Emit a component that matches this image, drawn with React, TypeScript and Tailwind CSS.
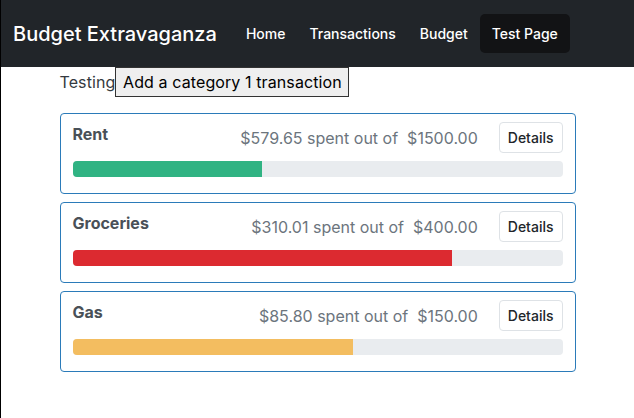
import React from "react";

const cats = [
  { name: "Rent", spent: 579.65, budget: 1500, color: "bg-[#30b383]" },
  { name: "Groceries", spent: 310.01, budget: 400, color: "bg-[#dc2a30]" },
  { name: "Gas", spent: 85.8, budget: 150, color: "bg-[#f3bd60]" },
];

export default function App() {
  return (
    <div className="min-h-[418px] border-l border-black bg-white" style={{ fontFamily: "Inter, 'Noto Sans', sans-serif" }}>
      <nav className="flex h-[67px] items-center bg-[#212529] pl-3">
        <span className="text-[20px] font-medium text-white">Budget Extravaganza</span>
        <div className="ml-[17px] flex items-center text-[14px] font-medium text-white">
          <span className="px-3 py-[9px]">Home</span>
          <span className="px-3 py-[9px]">Transactions</span>
          <span className="px-3 py-[9px]">Budget</span>
          <span className="rounded-[5px] bg-[#121315] px-3 py-[9px]">Test Page</span>
        </div>
      </nav>
      <div className="mx-auto w-[516px]">
        <div className="flex items-center text-[16px] text-[#343a40]">
          <span className="tracking-[0.1px]">Testing</span>
          <button className="h-[30px] w-[234px] border border-[#333] bg-[#efefef] text-center text-[16px] tracking-[0.1px] text-black">Add a category 1 transaction</button>
        </div>
        <div className="mt-4 flex flex-col gap-[8px]">
          {cats.map((c) => {
            const pct = (c.spent / c.budget) * 100;
            return (
              <div key={c.name} className="h-[81px] rounded-[4px] border border-[#2b7bb9] px-3 pt-2">
                <div className="flex items-start">
                  <span className="text-[16px] font-bold text-[#495057]">{c.name}</span>
                  <span className="ml-auto mt-[4px] text-[16px] text-[#6c757d]">
                    ${c.spent.toFixed(2)} spent out of&nbsp; ${c.budget.toFixed(2)}
                  </span>
                  <button className="ml-[21px] h-[31px] rounded-[4px] border border-[#dee2e6] bg-white px-[8px] text-[14px] font-medium text-[#212529]">Details</button>
                </div>
                <div className="mt-[8px] h-[16px] w-full overflow-hidden rounded-[4px] bg-[#e9ecef]">
                  <div className={`h-full ${c.color}`} style={{ width: `${pct}%` }} />
                </div>
              </div>
            );
          })}
        </div>
      </div>
    </div>
  );
}
